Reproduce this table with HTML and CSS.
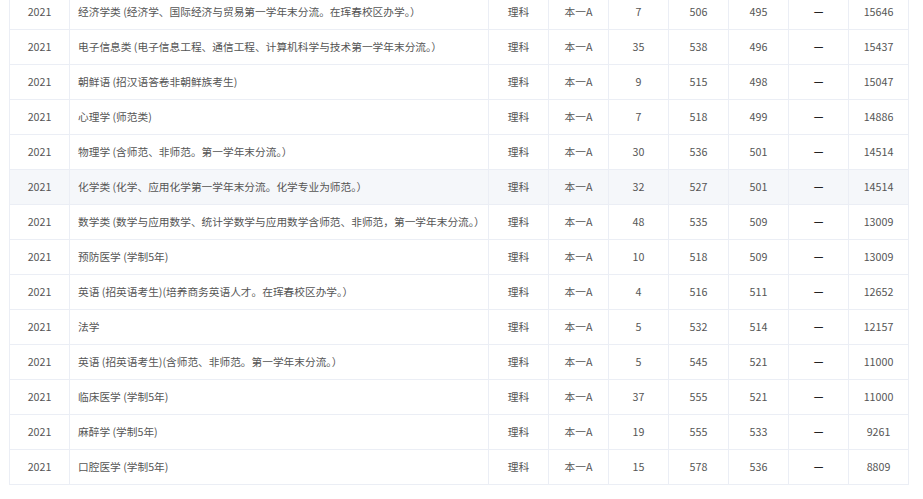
FILE: index.html
```html
<!DOCTYPE html>
<html lang="zh-CN">
<head>
<meta charset="utf-8">
<link rel="stylesheet" href="styles.css">
</head>
<body>
<div class="wrap">
<table class="score-table">
<colgroup>
<col class="c-year"><col class="c-major"><col class="c-n"><col class="c-n"><col class="c-n"><col class="c-n"><col class="c-n"><col class="c-n"><col class="c-n">
</colgroup>
<tbody>
<tr><td>2021</td><td class="major">经济学类 (经济学、国际经济与贸易第一学年末分流。在珲春校区办学。）</td><td>理科</td><td>本一A</td><td>7</td><td>506</td><td>495</td><td class="dash">—</td><td>15646</td></tr>
<tr><td>2021</td><td class="major">电子信息类 (电子信息工程、通信工程、计算机科学与技术第一学年末分流。）</td><td>理科</td><td>本一A</td><td>35</td><td>538</td><td>496</td><td class="dash">—</td><td>15437</td></tr>
<tr><td>2021</td><td class="major">朝鲜语 (招汉语答卷非朝鲜族考生)</td><td>理科</td><td>本一A</td><td>9</td><td>515</td><td>498</td><td class="dash">—</td><td>15047</td></tr>
<tr><td>2021</td><td class="major">心理学 (师范类)</td><td>理科</td><td>本一A</td><td>7</td><td>518</td><td>499</td><td class="dash">—</td><td>14886</td></tr>
<tr><td>2021</td><td class="major">物理学 (含师范、非师范。第一学年末分流。）</td><td>理科</td><td>本一A</td><td>30</td><td>536</td><td>501</td><td class="dash">—</td><td>14514</td></tr>
<tr class="hover"><td>2021</td><td class="major">化学类 (化学、应用化学第一学年末分流。化学专业为师范。）</td><td>理科</td><td>本一A</td><td>32</td><td>527</td><td>501</td><td class="dash">—</td><td>14514</td></tr>
<tr><td>2021</td><td class="major">数学类 (数学与应用数学、统计学数学与应用数学含师范、非师范，第一学年末分流。）</td><td>理科</td><td>本一A</td><td>48</td><td>535</td><td>509</td><td class="dash">—</td><td>13009</td></tr>
<tr><td>2021</td><td class="major">预防医学 (学制5年)</td><td>理科</td><td>本一A</td><td>10</td><td>518</td><td>509</td><td class="dash">—</td><td>13009</td></tr>
<tr><td>2021</td><td class="major">英语 (招英语考生)(培养商务英语人才。在珲春校区办学。）</td><td>理科</td><td>本一A</td><td>4</td><td>516</td><td>511</td><td class="dash">—</td><td>12652</td></tr>
<tr><td>2021</td><td class="major">法学</td><td>理科</td><td>本一A</td><td>5</td><td>532</td><td>514</td><td class="dash">—</td><td>12157</td></tr>
<tr><td>2021</td><td class="major">英语 (招英语考生)(含师范、非师范。第一学年末分流。）</td><td>理科</td><td>本一A</td><td>5</td><td>545</td><td>521</td><td class="dash">—</td><td>11000</td></tr>
<tr><td>2021</td><td class="major">临床医学 (学制5年)</td><td>理科</td><td>本一A</td><td>37</td><td>555</td><td>521</td><td class="dash">—</td><td>11000</td></tr>
<tr><td>2021</td><td class="major">麻醉学 (学制5年)</td><td>理科</td><td>本一A</td><td>19</td><td>555</td><td>533</td><td class="dash">—</td><td>9261</td></tr>
<tr><td>2021</td><td class="major">口腔医学 (学制5年)</td><td>理科</td><td>本一A</td><td>15</td><td>578</td><td>536</td><td class="dash">—</td><td>8809</td></tr>
</tbody>
</table>
</div>
</body>
</html>
```

FILE: styles.css
```css
html, body {
  margin: 0;
  padding: 0;
  background: #fff;
}
.wrap {
  padding-left: 9px;
  overflow: hidden;
  height: 499px;
}
.score-table {
  margin-top: -6px;
  border-collapse: collapse;
  table-layout: fixed;
  width: 899px;
  font-family: "Noto Sans CJK SC", "Microsoft YaHei", sans-serif;
  font-size: 10.7px;
  color: #555;
  border-left: 1px solid #ebeef5;
  border-right: 1px solid #ebeef5;
}
.c-year { width: 60px; }
.c-major { width: 419px; }
.c-n { width: 60px; }
.score-table td {
  height: 35px;
  padding: 0 4px;
  box-sizing: border-box;
  text-align: center;
  vertical-align: middle;
  border-bottom: 1px solid #ebeef5;
  border-right: 1px solid #ebeef5;
  white-space: nowrap;
  overflow: hidden;
}
.score-table td.major {
  text-align: left;
  padding-left: 8px;
}
.score-table td.dash {
  color: #222;
  font-weight: bold;
}
.score-table tr.hover td {
  background: #f5f7fa;
}
```
